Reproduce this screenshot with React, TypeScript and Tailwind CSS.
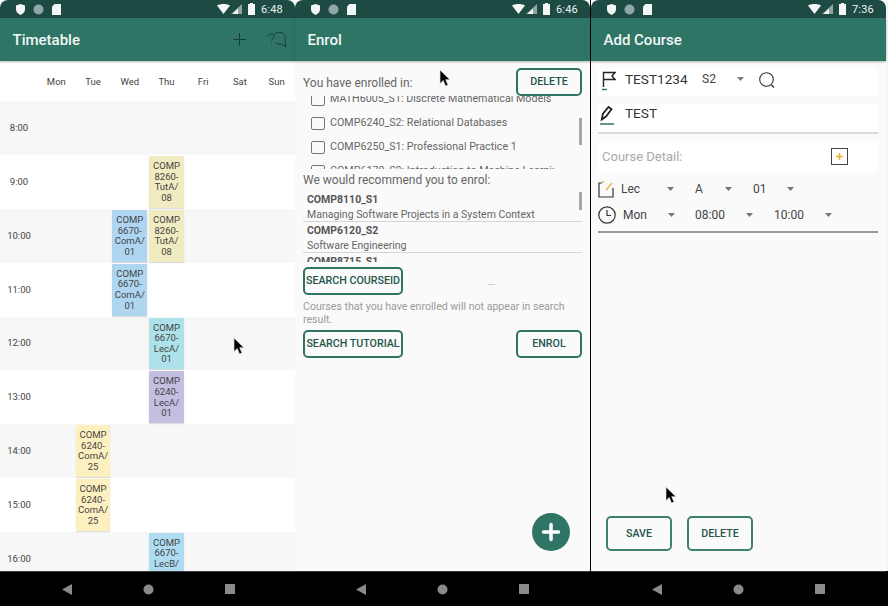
import React from "react";

function StatusBar({ time }: { time: string }) {
  return (
    <div className="h-[18px] shrink-0 bg-[#1d4a43] rounded-t-[8px] flex items-center pl-[16px] pr-[12px] text-white">
      <svg width="9" height="11" viewBox="0 0 9 11" className="mr-[8px]"><path d="M4.500 0 9 1.600v3.600C9 8 7 10 4.500 11 2 10 0 8 0 5.200V1.600z" fill="#f2f6f5" /></svg>
      <svg width="11" height="11" viewBox="0 0 11 11" className="mr-[8px]"><circle cx="5.500" cy="5.500" r="5" fill="#8fa8a5" /></svg>
      <svg width="9" height="11" viewBox="0 0 9 11"><path d="M2.500 0H9v11H0V2.500z" fill="#f2f6f5" /></svg>
      <div className="flex-1" />
      <svg width="13" height="10" viewBox="0 0 13 10" className="mr-[1px]"><path d="M0 1.500C3.500-.5 9.500-.5 13 1.500L6.500 10z" fill="#f4f7f6" /></svg>
      <svg width="11" height="10" viewBox="0 0 11 10" className="mr-[6px]"><path d="M11 0v10H0z" fill="#8da6a2" /><path d="M7 4.500V10H1.500z" fill="#f4f7f6" /></svg>
      <svg width="7" height="12" viewBox="0 0 7 12" className="mr-[6px]"><path d="M2 0h3v1h2v11H0V1h2z" fill="#f4f7f6" /></svg>
      <span className="text-[11px] leading-none text-[#eef3f2] tracking-[0.2px]">{time}</span>
    </div>
  );
}

function AppBar({ title, children }: { title: string; children?: React.ReactNode }) {
  return (
    <div className="h-[43px] shrink-0 bg-[#2f7566] flex items-center pl-[12.500px] pr-[8px] shadow-[0_1px_2px_rgba(0,0,0,0.3)] relative z-10">
      <span className="text-[15px] font-medium text-[#f2f6f5] pt-[1px]">{title}</span>
      <div className="flex-1" />
      {children}
    </div>
  );
}

function NavBar({ className = "" }: { className?: string }) {
  return (
    <div className={`h-[35px] shrink-0 bg-black border-t border-[#3a3a3a] flex items-center justify-center gap-[71px] ${className}`}>
      <svg width="10" height="11" viewBox="0 0 10 11"><path d="M10 0v11L0 5.500z" fill="#8a8a8a" /></svg>
      <svg width="11" height="11" viewBox="0 0 11 11"><circle cx="5.500" cy="5.500" r="5" fill="#8a8a8a" /></svg>
      <svg width="10" height="10" viewBox="0 0 10 10"><rect width="10" height="10" fill="#8a8a8a" /></svg>
    </div>
  );
}

function Cursor({ className }: { className: string }) {
  return (
    <svg width="13" height="19" viewBox="0 0 13 19" className={`absolute z-20 ${className}`}>
      <path d="M1 1v13.500l3.300-3 2.200 5.500 2.500-1-2.300-5.300H11z" fill="#000" stroke="#ddd" strokeWidth="0.7" />
    </svg>
  );
}

function Btn({ label, className }: { label: string; className: string }) {
  return (
    <div className={`shrink-0 rounded-[5px] border-2 border-[#2f7566] bg-[#fafafa] flex items-center justify-center pt-[1px] text-[10.700px] font-medium text-[#24564c] whitespace-nowrap ${className}`}>
      {label}
    </div>
  );
}

type Ev = { col: number; row: number; lines: string[]; bg: string };
const events: Ev[] = [
  { col: 3, row: 1, lines: ["COMP", "8260-", "TutA/", "08"], bg: "bg-[#f0ebc0]" },
  { col: 2, row: 2, lines: ["COMP", "6670-", "ComA/", "01"], bg: "bg-[#aed6f1]" },
  { col: 3, row: 2, lines: ["COMP", "8260-", "TutA/", "08"], bg: "bg-[#f0ebc0]" },
  { col: 2, row: 3, lines: ["COMP", "6670-", "ComA/", "01"], bg: "bg-[#aed6f1]" },
  { col: 3, row: 4, lines: ["COMP", "6670-", "LecA/", "01"], bg: "bg-[#aee2ea]" },
  { col: 3, row: 5, lines: ["COMP", "6240-", "LecA/", "01"], bg: "bg-[#c3bfe0]" },
  { col: 1, row: 6, lines: ["COMP", "6240-", "ComA/", "25"], bg: "bg-[#fdf0c0]" },
  { col: 1, row: 7, lines: ["COMP", "6240-", "ComA/", "25"], bg: "bg-[#fdf0c0]" },
  { col: 3, row: 8, lines: ["COMP", "6670-", "LecB/", "01"], bg: "bg-[#aedcf3]" },
];
const hours = ["8:00", "9:00", "10:00", "11:00", "12:00", "13:00", "14:00", "15:00", "16:00"];
const days = ["Mon", "Tue", "Wed", "Thu", "Fri", "Sat", "Sun"];

function Timetable() {
  return (
    <div className="w-[295px] shrink-0 flex flex-col h-full bg-white relative">
      <StatusBar time="6:48" />
      <AppBar title="Timetable">
        <svg width="15" height="15" viewBox="0 0 15 15" className="mr-[20px]" fill="none" stroke="#173d36" strokeWidth="1"><path d="M7.500 1v13M1 7.500h13" /></svg>
        <svg width="20" height="18" viewBox="0 0 20 18" fill="none" stroke="#173d36" strokeWidth="1"><path d="M1 5.500C2 2 6.500 2 7 5c.3 2-2 2.500-2.500 4.500M4.500 12v1" /><path d="M7 3.500C9 1 14 .5 16 2.500c2.500 2 3 5.500 2 8.500l1 5-4.500-3c-2 .5-4 0-6-1" /></svg>
      </AppBar>
      <div className="flex-1 min-h-0 overflow-hidden">
        <div className="h-[40.400px] grid grid-cols-[38px_repeat(7,1fr)] items-center text-[9.500px] text-[#444] pt-[2px]">
          <div />
          {days.map((d) => <div key={d} className="text-center">{d}</div>)}
        </div>
        {hours.map((h, r) => (
          <div key={h} className={`h-[53.800px] grid grid-cols-[38px_repeat(7,1fr)] ${r % 2 === 0 ? "bg-[#f7f7f7]" : "bg-white"}`}>
            <div className="flex items-center justify-center text-[9.500px] text-[#444]">{h}</div>
            {days.map((d, c) => {
              const e = events.find((x) => x.row === r && x.col === c);
              return (
                <div key={d} className="py-[1px] px-[1px]">
                  {e && (
                    <div className={`${e.bg} h-[51.800px] text-center text-[9.500px] leading-[10.600px] text-[#444] pt-[5px] shadow-[0_1px_1px_rgba(0,0,0,0.12)]`}>
                      {e.lines.map((l, i) => <div key={i}>{l}</div>)}
                    </div>
                  )}
                </div>
              );
            })}
          </div>
        ))}
      </div>
      <NavBar className="pl-[2px]" />
      <Cursor className="left-[233px] top-[337px]" />
    </div>
  );
}

function Check({ label }: { label: string }) {
  return (
    <div className="h-[24px] shrink-0 flex items-center pl-[8px]">
      <div className="w-[14px] h-[13px] rounded-[2px] border-[1.500px] border-[#757575] mr-[5px]" />
      <span className="text-[10.700px] text-[#666] whitespace-nowrap max-w-[224px] overflow-hidden">{label}</span>
    </div>
  );
}

function Rec({ id, name }: { id: string; name: string }) {
  return (
    <div className="h-[31px] shrink-0 border-b border-[#d5d5d5] pl-[4px]">
      <div className="text-[10.500px] font-bold text-[#555] leading-[14px] pt-[2px]">{id}</div>
      <div className="text-[10.500px] text-[#666] leading-[14px] mt-[1px] whitespace-nowrap">{name}</div>
    </div>
  );
}

function Enrol() {
  return (
    <div className="w-[296px] shrink-0 flex flex-col h-full bg-[#fafafa] relative border-r border-black">
      <StatusBar time="6:46" />
      <AppBar title="Enrol" />
      <div className="flex-1 min-h-0 relative flex flex-col px-[8px] overflow-hidden">
        <div className="flex items-center justify-between mt-[7px] h-[28px] shrink-0 relative z-10">
          <span className="text-[12px] text-[#666] pt-[2px]">You have enrolled in:</span>
          <Btn label="DELETE" className="w-[66px] h-[28px]" />
        </div>
        <div className="h-[73px] shrink-0 overflow-hidden relative">
          <div className="-mt-[9px] flex flex-col">
            <Check label="MATH6005_S1: Discrete Mathematical Models" />
            <Check label="COMP6240_S2: Relational Databases" />
            <Check label="COMP6250_S1: Professional Practice 1" />
            <Check label="COMP6170_S2: Introduction to Machine Learning" />
          </div>
          <div className="absolute right-0 top-[22px] w-[3px] h-[27px] bg-[#a8a8a8]" />
        </div>
        <div className="text-[12px] text-[#666] h-[21px] shrink-0 flex items-center">We would recommend you to enrol:</div>
        <div className="h-[72px] shrink-0 overflow-hidden relative pt-[1px]">
          <Rec id="COMP8110_S1" name="Managing Software Projects in a System Context" />
          <Rec id="COMP6120_S2" name="Software Engineering" />
          <Rec id="COMP8715_S1" name="Computing Project" />
          <div className="absolute right-0 top-[2px] w-[3px] h-[18px] bg-[#a8a8a8]" />
        </div>
        <div className="flex items-center mt-[5px] shrink-0">
          <Btn label="SEARCH COURSEID" className="w-[100px] h-[28px]" />
          <span className="text-[9px] text-[#777] ml-[85px] mt-[3px]">...</span>
        </div>
        <div className="text-[10.600px] leading-[12.500px] text-[#999] mt-[6px] shrink-0">Courses that you have enrolled will not appear in search result.</div>
        <div className="flex items-center justify-between mt-[4px] shrink-0">
          <Btn label="SEARCH TUTORIAL" className="w-[100px] h-[28px]" />
          <Btn label="ENROL" className="w-[66px] h-[28px]" />
        </div>
        <div className="absolute right-[20px] bottom-[20px] w-[38px] h-[38px] rounded-full bg-[#2f7566] flex items-center justify-center">
          <svg width="20" height="20" viewBox="0 0 20 20" fill="none" stroke="#fff" strokeWidth="3.500" strokeLinecap="round"><path d="M10 2.500v15M2.500 10h15" /></svg>
        </div>
      </div>
      <NavBar />
      <Cursor className="left-[144px] top-[69px]" />
    </div>
  );
}

function Caret({ className = "" }: { className?: string }) {
  return <svg width="7" height="4" viewBox="0 0 7 4" className={`shrink-0 ${className}`}><path d="M0 0h7L3.500 4z" fill="#777" /></svg>;
}

function Sel({ label, className }: { label: string; className: string }) {
  return (
    <div className={`flex items-center justify-between shrink-0 ${className}`}>
      <span className="text-[12px] text-[#444]">{label}</span>
      <Caret />
    </div>
  );
}

function AddCourse() {
  return (
    <div className="w-[295px] shrink-0 flex flex-col h-full bg-[#fafafa] relative">
      <StatusBar time="7:36" />
      <AppBar title="Add Course" />
      <div className="flex-1 min-h-0 flex flex-col pl-[7px] pr-[8px]">
        <div className="h-[28px] mt-[7px] bg-white flex items-center shrink-0 pb-[6px]">
          <svg width="14" height="20" viewBox="0 0 14 20" fill="none" className="ml-[4px] mr-[9px] mt-[4px]">
            <path d="M1.500 16V1.500h11.500l-3 3.500 3 3.500h-11.500" stroke="#222" strokeWidth="1.400" />
            <path d="M0 18.500h5" stroke="#2f7566" strokeWidth="1.500" />
          </svg>
          <span className="text-[13.600px] text-[#333] w-[77px]">TEST1234</span>
          <span className="text-[12px] text-[#444] w-[35px]">S2</span>
          <Caret className="mr-[15px]" />
          <svg width="17" height="17" viewBox="0 0 17 17" fill="none" stroke="#333" strokeWidth="1.100" className="mt-[2px]"><circle cx="7.500" cy="7.500" r="6.800" /><path d="M12.500 13l2.500 2.500" strokeWidth="1.500" /></svg>
        </div>
        <div className="h-[30px] mt-[8px] bg-white flex items-center shrink-0 border-b-2 border-[#d8d8d8] pb-[9px]">
          <svg width="14" height="22" viewBox="0 0 14 22" fill="none" className="ml-[2px] mr-[11px] mt-[5px]">
            <path d="M1.800 14.500l1-5.500L8.500 2l3 2.200L6 11.500z" stroke="#222" strokeWidth="1.800" />
            <path d="M0 19h14" stroke="#2f7566" strokeWidth="1.500" />
          </svg>
          <span className="text-[13.600px] text-[#333]">TEST</span>
        </div>
        <div className="h-[31px] mt-[7px] bg-white flex items-center shrink-0 pl-[4px]">
          <span className="text-[13px] text-[#aaa] w-[229px]">Course Detail:</span>
          <div className="w-[17px] h-[17px] border-[1.500px] border-[#444] flex items-center justify-center">
            <svg width="9" height="9" viewBox="0 0 9 9" stroke="#eeb23e" strokeWidth="1.700"><path d="M4.500 1v7M1 4.500h7" /></svg>
          </div>
        </div>
        <div className="h-[26px] mt-[4px] flex items-center shrink-0">
          <svg width="17" height="17" viewBox="0 0 17 17" fill="none" className="mr-[6px]">
            <path d="M4 2H1v14h14V7" stroke="#333" strokeWidth="1.200" />
            <path d="M8 9l6-7" stroke="#eeb23e" strokeWidth="1.200" />
            <path d="M4 1h2" stroke="#eeb23e" strokeWidth="1.500" />
          </svg>
          <Sel label="Lec" className="w-[53px] mr-[21px]" />
          <Sel label="A" className="w-[37px] mr-[21px]" />
          <Sel label="01" className="w-[41px]" />
        </div>
        <div className="h-[25px] flex items-center shrink-0">
          <svg width="18" height="18" viewBox="0 0 18 18" fill="none" stroke="#333" strokeWidth="1.200" className="mr-[7px]"><circle cx="9" cy="9" r="8.200" /><path d="M9 4v5.500h4" /></svg>
          <Sel label="Mon" className="w-[52px] mr-[20px]" />
          <Sel label="08:00" className="w-[58px] mr-[21px]" />
          <Sel label="10:00" className="w-[58px]" />
        </div>
        <div className="h-[2px] mt-[4px] bg-[#999] shrink-0" />
        <div className="mt-auto mb-[20px] ml-[8px] flex gap-[15px] shrink-0">
          <Btn label="SAVE" className="w-[66px] h-[35px] border-[#3f8070]" />
          <Btn label="DELETE" className="w-[66px] h-[35px] border-[#3f8070]" />
        </div>
      </div>
      <NavBar />
      <Cursor className="left-[74px] top-[486px]" />
    </div>
  );
}

export default function App() {
  return (
    <div className="w-[888px] h-[606px] bg-black flex overflow-hidden font-['Roboto',sans-serif]">
      <Timetable />
      <Enrol />
      <AddCourse />
      <div className="flex-1 flex flex-col">
        <div className="flex-1 bg-[#f4f4f4]" />
        <div className="h-[35px] bg-black" />
      </div>
    </div>
  );
}
